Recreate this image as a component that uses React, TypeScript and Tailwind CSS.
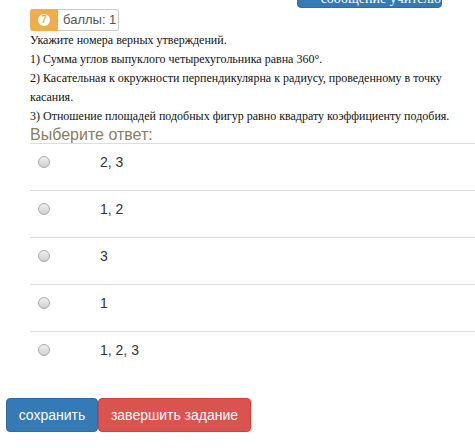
const statements = [
  "Укажите номера верных утверждений.",
  "1) Сумма углов выпуклого четырехугольника равна 360°.",
  "2) Касательная к окружности перпендикулярна к радиусу, проведенному в точку касания.",
  "3) Отношение площадей подобных фигур равно квадрату коэффициенту подобия.",
];

const answers = ["2, 3", "1, 2", "3", "1", "1, 2, 3"];

const Radio = () => (
  <span className="block w-[12px] h-[12px] shrink-0 rounded-full border border-[#aaaaaa] bg-gradient-to-b from-[#f0f0f0] to-[#cfcfcf]" />
);

export default function App() {
  return (
    <div className="w-[475px] h-[448px] overflow-hidden bg-white px-[6px] font-['Liberation_Sans',Arial,sans-serif]">
      {/* message-to-teacher button, cut off by the top edge */}
      <div className="flex justify-end pr-[27px]">
        <button className="-mt-[22px] h-[30px] w-[145px] flex items-end gap-[14px] pl-[8px] pb-[1px] rounded-[4px] bg-[#337ab7] border border-[#2e6da4] text-white text-[14px] leading-[14px] whitespace-nowrap font-['Liberation_Serif',serif]">
          <svg width="8" height="8" viewBox="0 0 8 8" className="mb-[3px]">
            <path d="M1 1 L7 4 L1 7 Z" fill="white" />
          </svg>
          <span>сообщение учителю</span>
        </button>
      </div>

      <div className="ml-[24px]">
        {/* points badge */}
        <div className="mt-[1px] flex h-[22px] w-[89px]">
          <div className="w-[28px] shrink-0 flex items-center justify-center bg-[#f0ad4e] rounded-l-[3px]">
            <span className="w-[12px] h-[12px] rounded-full bg-white flex items-center justify-center text-[10px] leading-none font-bold text-[#f0ad4e]">
              7
            </span>
          </div>
          <div className="flex-1 flex items-center pl-[5px] whitespace-nowrap border border-l-0 border-[#cccccc] rounded-r-[3px] text-[13px] text-[#555555]">
            баллы: 1
          </div>
        </div>

        {/* question */}
        <div className="font-['Liberation_Serif','Times_New_Roman',serif] text-[12px] leading-[19px] text-[#111111]">
          {statements.map((s) => (
            <p key={s}>{s}</p>
          ))}
        </div>

        <div className="text-[16px] leading-[17px] text-[#8a7d62]">Выберите ответ:</div>

        {/* answer options */}
        <div className="-mr-[6px]">
          {answers.map((a) => (
            <label
              key={a}
              className="flex items-center border-t border-[#dddddd] pt-[8px] pb-[18px] pl-[8px] text-[14px] leading-[20px] text-[#333333]"
            >
              <Radio />
              <span className="ml-[50px]">{a}</span>
            </label>
          ))}
        </div>
      </div>

      {/* actions */}
      <div className="mt-[20px] flex text-[14px] leading-[20px] text-white">
        <button className="h-[34px] w-[92px] rounded-[4px] bg-[#337ab7] border border-[#2e6da4]">
          сохранить
        </button>
        <button className="h-[34px] w-[153px] rounded-[4px] bg-[#d9534f] border border-[#d43f3a]">
          завершить задание
        </button>
      </div>
    </div>
  );
}
